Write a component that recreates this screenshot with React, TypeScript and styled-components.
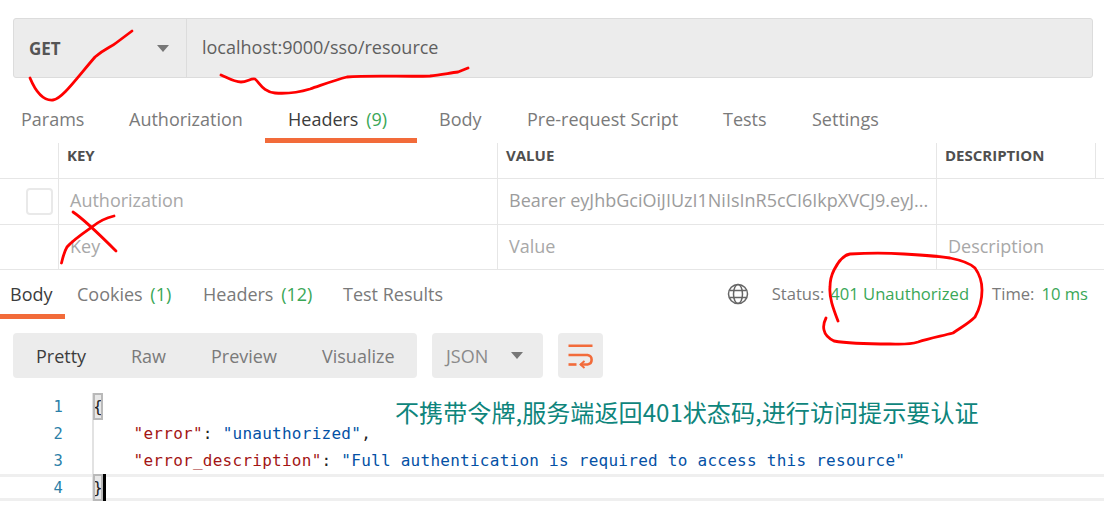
import React from "react";
import styled, { createGlobalStyle } from "styled-components";

const Global = createGlobalStyle`
  html, body { margin: 0; padding: 0; background: #fff; }
  body { width: 1104px; height: 513px; overflow: hidden; font-family: "Open Sans", "Liberation Sans", sans-serif; }
  * { box-sizing: border-box; }
`;
const Page = styled.div`
  position: relative; width: 1104px; height: 513px; overflow: hidden; background: #fff; padding-top: 18px;
`;
const UrlBar = styled.div`
  display: flex; height: 60px; margin: 0 11px 0 13px; background: #ececec; border: 1px solid #dcdcdc; border-radius: 3px;
`;
const Method = styled.div`
  width: 173px; display: flex; align-items: center; justify-content: space-between; padding: 0 17px 0 15px;
  border-right: 1px solid #dcdcdc; font-size: 17px; font-weight: 700; color: #555;
`;
const Caret = styled.span`
  width: 0; height: 0; border-left: 6px solid transparent; border-right: 6px solid transparent; border-top: 7px solid #777;
`;
const Url = styled.div`
  display: flex; align-items: center; padding: 0 0 3px 15px; font-size: 18px; color: #5f5f5f;
`;
const ReqTabs = styled.div`
  display: flex; height: 47px; margin-top: 18px; padding-left: 21px;
`;
const ReqTab = styled.div<{ $active?: boolean; $w: number; $pl?: number }>`
  width: ${p => p.$w}px; height: 47px; padding: 11px 0 0 ${p => p.$pl ?? 0}px; font-size: 18px; line-height: 24px; white-space: nowrap;
  color: ${p => (p.$active ? "#3c3c3c" : "#7a7a7a")};
  ${p => p.$active && "border-bottom: 5px solid #f26b3a;"}
`;
const Count = styled.span`
  color: #3aa757; margin-left: 3px;
`;
const Row = styled.div<{ $h: number }>`
  display: grid; grid-template-columns: 59px 439px 439px 159px 8px; height: ${p => p.$h}px;
  border-bottom: 1px solid #e6e6e6;
`;
const Cell = styled.div<{ $kind?: "head" | "ph" | "val"; $noLine?: boolean }>`
  display: flex; align-items: center; overflow: hidden; white-space: nowrap;
  padding: 0 0 ${p => (p.$kind === "head" ? 12 : 3)}px ${p => (p.$kind === "head" ? 8 : 11)}px;
  border-right: ${p => (p.$noLine ? "none" : "1px solid #e6e6e6")};
  font-size: ${p => (p.$kind === "head" ? "15px" : "18px")};
  font-weight: ${p => (p.$kind === "head" ? 700 : 400)};
  color: ${p => (p.$kind === "head" ? "#4f4f4f" : p.$kind === "val" ? "#9c9c9c" : "#a8a8a8")};
`;
const CheckCell = styled.div`
  display: flex; align-items: center; padding-left: 26px; border-right: 1px solid #e6e6e6;
`;
const Check = styled.span`
  width: 27px; height: 27px; border: 2px solid #e9e9e9; border-radius: 4px; background: #fff;
`;
const ResBar = styled.div`
  display: flex; align-items: flex-start; height: 49px;
`;
const ResTab = styled.div<{ $active?: boolean; $w: number; $pl?: number }>`
  width: ${p => p.$w}px; height: 49px; padding: 12px 0 0 ${p => p.$pl ?? 0}px; font-size: 18px; line-height: 24px; white-space: nowrap;
  color: ${p => (p.$active ? "#3c3c3c" : "#7a7a7a")};
  ${p => p.$active && "border-bottom: 5px solid #f26b3a;"}
`;
const Meta = styled.div`
  margin-left: auto; display: flex; align-items: center; height: 49px; padding: 0 16px 2px 0; font-size: 16.6px; color: #7a7a7a;
`;
const Globe = styled.svg`
  width: 22px; height: 22px; margin-right: 23px;
`;
const Good = styled.span<{ $before: number; $gap: number }>`
  color: #3aa757; margin-left: ${p => p.$before}px; margin-right: ${p => p.$gap}px;
`;
const Toolbar = styled.div`
  display: flex; gap: 15px; height: 45px; margin: 14px 0 0 13px;
`;
const Seg = styled.div`
  display: flex; width: 404px; background: #ececec; border-radius: 4px; padding-left: 23px; align-items: center; font-size: 18px; color: #7a7a7a;
`;
const SegItem = styled.span<{ $active?: boolean; $w: number }>`
  width: ${p => p.$w}px; color: ${p => (p.$active ? "#3c3c3c" : "#7a7a7a")};
`;
const Json = styled.div`
  width: 111px; display: flex; align-items: center; justify-content: space-between; padding: 0 20px 0 14px;
  background: #ececec; border-radius: 4px; font-size: 18px; color: #8a8a8a;
`;
const Wrap = styled.div`
  width: 45px; display: flex; align-items: center; justify-content: center; background: #ececec; border-radius: 4px;
`;
const Editor = styled.div`
  margin-top: 15px; font-family: "DejaVu Sans Mono", monospace; font-size: 16px; letter-spacing: 0.26px; line-height: 27px;
`;
const Line = styled.div<{ $active?: boolean }>`
  display: flex; height: 27px; white-space: pre;
  ${p => p.$active && "background: linear-gradient(#efefef 0 3px, #fff 3px 24px, #efefef 24px);"}
`;
const Gutter = styled.span`
  width: 92px; padding: 1px 29px 0 0; text-align: right; color: #2b7fa8; font-size: 15.5px;
`;
const Code = styled.span`
  border-left: 2px solid #e2e2e2; color: #222;
`;
const Brace = styled.span`
  background: #e8e8e8; outline: 2px solid #b9b9b9; outline-offset: -2px; display: inline-block; height: 27px; margin-left: -1px;
`;
const Key = styled.span` color: #a31515; `;
const Str = styled.span` color: #0451a5; `;
const Cursor = styled.span`
  display: inline-block; width: 3px; height: 27px; background: #000; vertical-align: top;
`;
const Note = styled.div`
  position: absolute; left: 395px; top: 396px; font-family: "Noto Sans CJK SC", sans-serif; font-size: 24.1px; line-height: 32px; color: #0e857c; white-space: nowrap;
`;
const Ink = styled.svg`
  position: absolute; left: 0; top: 0; width: 1104px; height: 513px; pointer-events: none;
`;

export default function App() {
  return (
    <Page>
      <Global />
      <UrlBar>
        <Method>GET<Caret /></Method>
        <Url>localhost:9000/sso/resource</Url>
      </UrlBar>
      <ReqTabs>
        <ReqTab $w={108}>Params</ReqTab>
        <ReqTab $w={136}>Authorization</ReqTab>
        <ReqTab $w={152} $pl={23} $active>Headers <Count>(9)</Count></ReqTab>
        <ReqTab $w={110} $pl={22}>Body</ReqTab>
        <ReqTab $w={196}>Pre-request Script</ReqTab>
        <ReqTab $w={89}>Tests</ReqTab>
        <ReqTab $w={80}>Settings</ReqTab>
      </ReqTabs>
      <Row $h={36}>
        <Cell />
        <Cell $kind="head">KEY</Cell>
        <Cell $kind="head">VALUE</Cell>
        <Cell $kind="head">DESCRIPTION</Cell>
      </Row>
      <Row $h={46}>
        <CheckCell><Check /></CheckCell>
        <Cell $kind="ph">Authorization</Cell>
        <Cell $kind="val">Bearer eyJhbGciOiJIUzI1NiIsInR5cCI6IkpXVCJ9.eyJ...</Cell>
        <Cell $noLine />
      </Row>
      <Row $h={45}>
        <Cell />
        <Cell $kind="ph">Key</Cell>
        <Cell $kind="ph">Value</Cell>
        <Cell $kind="ph" $noLine>Description</Cell>
      </Row>
      <ResBar>
        <ResTab $w={65} $pl={10} $active>Body</ResTab>
        <ResTab $w={138} $pl={12}>Cookies <Count>(1)</Count></ResTab>
        <ResTab $w={140}>Headers <Count>(12)</Count></ResTab>
        <ResTab $w={120}>Test Results</ResTab>
        <Meta>
          <Globe viewBox="0 0 22 22" fill="none" stroke="#666" strokeWidth="1.5">
            <circle cx="11" cy="11" r="9.5" />
            <ellipse cx="11" cy="11" rx="4.5" ry="9.5" />
            <path d="M2.5 7.5h17M2.5 14.5h17" />
          </Globe>
          Status:<Good $before={6} $gap={23}>401 Unauthorized</Good>Time:<Good $before={7} $gap={0}>10 ms</Good>
        </Meta>
      </ResBar>
      <Toolbar>
        <Seg>
          <SegItem $w={95} $active>Pretty</SegItem>
          <SegItem $w={80}>Raw</SegItem>
          <SegItem $w={111}>Preview</SegItem>
          <SegItem $w={80}>Visualize</SegItem>
        </Seg>
        <Json>JSON<Caret /></Json>
        <Wrap>
          <svg width="26" height="26" viewBox="0 0 26 26" fill="none" stroke="#f26b3a" strokeWidth="2.6">
            <path d="M0.5 2.8h24M0.5 12h19a4.8 4.8 0 0 1 0 9.5h-7" />
            <path d="M0.5 21.5h8" />
            <path d="M16.5 18l-4 3.5 4 3.5" strokeWidth="1.9" />
          </svg>
        </Wrap>
      </Toolbar>
      <Editor>
        <Line><Gutter>1</Gutter><Code><Brace>{"{"}</Brace></Code></Line>
        <Line><Gutter>2</Gutter><Code>{"    "}<Key>"error"</Key>: <Str>"unauthorized"</Str>,</Code></Line>
        <Line><Gutter>3</Gutter><Code>{"    "}<Key>"error_description"</Key>: <Str>"Full authentication is required to access this resource"</Str></Code></Line>
        <Line $active><Gutter>4</Gutter><Code><Brace>{"}"}</Brace><Cursor /></Code></Line>
      </Editor>
      <Note>不携带令牌,服务端返回401状态码,进行访问提示要认证</Note>
      <Ink viewBox="0 0 1104 513" fill="none" stroke="#f00" strokeWidth="2.8" strokeLinecap="round" strokeLinejoin="round">
        <path d="M30 78C35 90 43 101 53 100C62 99 76 79 95 57C104 49 111 47 116 43L132 31" />
        <path d="M221 75C228 78 234 82 241 82C247 82 251 78 255 79C260 83 263 92 275 93C288 94 300 92 310 89C322 85 335 80 347 77C370 75 410 77 430 76C440 75 450 73 458 72L468 68" />
        <path d="M73 212C85 220 100 235 116 251" />
        <path d="M114 216C105 218 98 222 92 227C82 234 73 240 67 247C64 252 63 257 61.5 263" />
        <path d="M838 321C833 308 829 297 830 287C830 280 831 276 834 270C838 262 843 255 850 254C868 253 888 253 904 254C920 255 938 256 950 258C960 260 970 263 975 268C980 275 982 282 982 290C982 300 979 310 975 317C968 324 960 328 953 333C942 336 930 338 918 342C908 345 899 344 890 344C870 344 850 344 834 341C828 338 825 335 824 330C823 326 824 322 826 318" />
      </Ink>
    </Page>
  );
}
